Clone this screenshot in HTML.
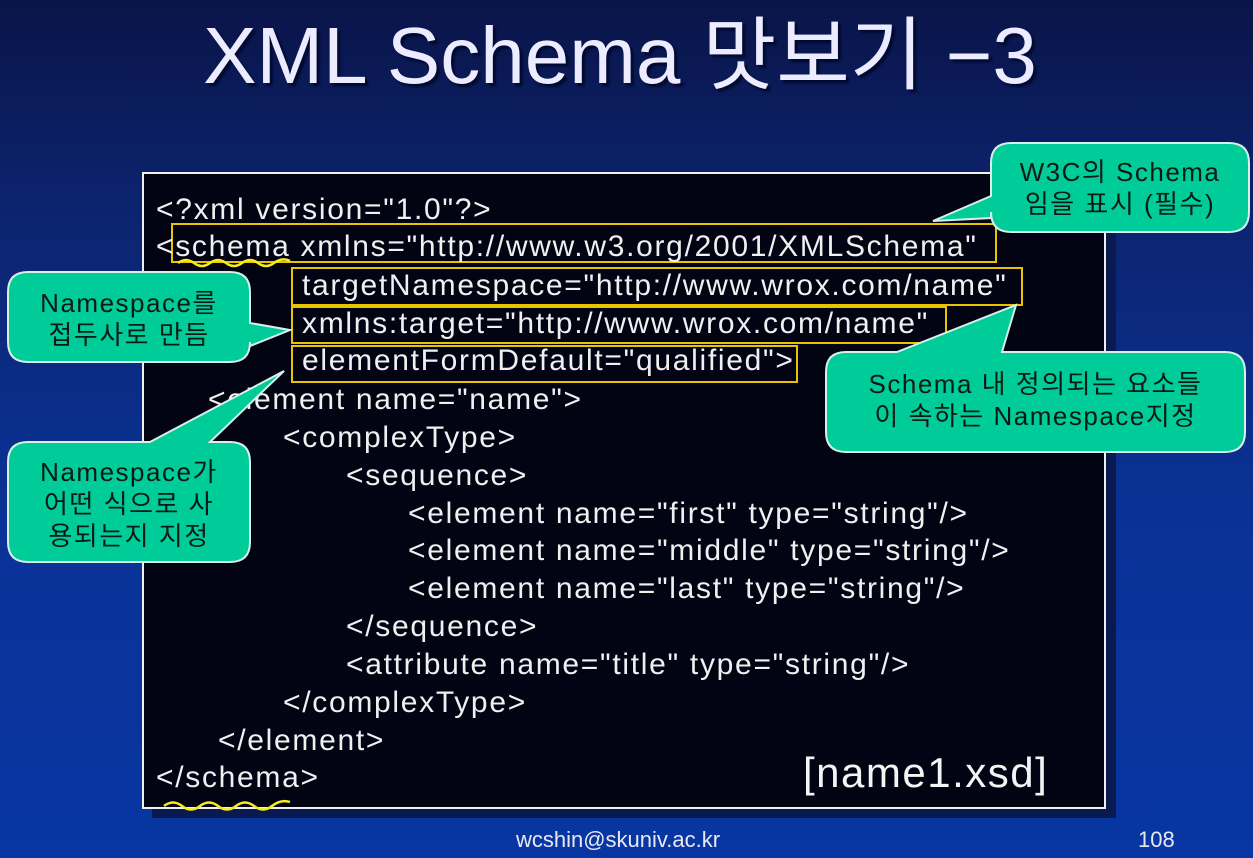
<!DOCTYPE html>
<html><head><meta charset="utf-8"><style>
*{margin:0;padding:0;box-sizing:border-box}
html,body{width:1253px;height:858px;overflow:hidden}
body{position:relative;background:linear-gradient(180deg,#0a1448 0%,#0c2470 25%,#0a3296 60%,#0836a2 100%);font-family:"Liberation Sans","Noto Sans CJK KR",sans-serif}
.t{position:absolute;white-space:pre}
.title{left:0;width:1240px;top:-9px;text-align:center;font-size:80px;color:#ecebff;text-shadow:3px 3px 2px #000a30}
.code{font-size:30px;color:#f0f0f0;line-height:38px;letter-spacing:1.7px}
.cb{position:absolute;border:2px solid #e8c400}
.ct{position:absolute;text-align:center;color:#0a1a14;font-size:26px;line-height:32px;letter-spacing:1.5px}
</style></head><body>
<div class="t title">XML Schema 맛보기 −3</div>
<div style="position:absolute;left:152px;top:182px;width:964px;height:636px;background:#081a50"></div>
<div style="position:absolute;left:142px;top:172px;width:964px;height:637px;background:#020414;border:2px solid #f0f0f0"></div>
<div class="cb" style="left:171px;top:223px;width:826px;height:40px"></div>
<div class="cb" style="left:291px;top:267px;width:732px;height:39px"></div>
<div class="cb" style="left:291px;top:306px;width:656px;height:38px"></div>
<div class="cb" style="left:291px;top:345px;width:507px;height:38px"></div>
<div class="t code" style="left:156px;top:191px">&lt;?xml version="1.0"?&gt;</div>
<div class="t code" style="left:156px;top:228px">&lt;schema xmlns="http://www.w3.org/2001/XMLSchema"</div>
<div class="t code" style="left:302px;top:267px">targetNamespace="http://www.wrox.com/name"</div>
<div class="t code" style="left:302px;top:305px">xmlns:target="http://www.wrox.com/name"</div>
<div class="t code" style="left:302px;top:342px">elementFormDefault="qualified"&gt;</div>
<div class="t code" style="left:208px;top:381px">&lt;element name="name"&gt;</div>
<div class="t code" style="left:283px;top:419px">&lt;complexType&gt;</div>
<div class="t code" style="left:346px;top:457px">&lt;sequence&gt;</div>
<div class="t code" style="left:408px;top:495px">&lt;element name="first" type="string"/&gt;</div>
<div class="t code" style="left:408px;top:532px">&lt;element name="middle" type="string"/&gt;</div>
<div class="t code" style="left:408px;top:570px">&lt;element name="last" type="string"/&gt;</div>
<div class="t code" style="left:346px;top:608px">&lt;/sequence&gt;</div>
<div class="t code" style="left:346px;top:646px">&lt;attribute name="title" type="string"/&gt;</div>
<div class="t code" style="left:283px;top:684px">&lt;/complexType&gt;</div>
<div class="t code" style="left:218px;top:722px">&lt;/element&gt;</div>
<div class="t code" style="left:156px;top:759px">&lt;/schema&gt;</div>
<div class="t" style="left:803px;top:749px;font-size:42px;letter-spacing:1.5px;color:#f4f4f4">[name1.xsd]</div>
<svg style="position:absolute;left:0;top:0" width="1253" height="858">
<g fill="none" stroke="#f4ec20" stroke-width="2.5">
<path d="M178 263 q8 -6 16 0 t16 0 t16 0 t16 0 t16 0 t16 0 t16 -2"/>
<path d="M164 806 q9 -7 18 0 t18 0 t18 0 t18 0 t18 0 t18 0 t18 -4"/>
</g>
<g fill="#00cc99" stroke="#d8f0e8" stroke-width="2">
<path d="M1011 143 H1229 Q1249 143 1249 163 V212 Q1249 232 1229 232 H1011 Q991 232 991 212 V218 L933 221 L991 196 V163 Q991 143 1011 143 Z"/>
<path d="M846 352 H897 L1016 305 L1002 352 H1225 Q1245 352 1245 372 V432 Q1245 452 1225 452 H846 Q826 452 826 432 V372 Q826 352 846 352 Z"/>
<path d="M28 272 H230 Q250 272 250 292 V323 L290 330 L250 346 V342 Q250 362 230 362 H28 Q8 362 8 342 V292 Q8 272 28 272 Z"/>
<path d="M28 442 H150 L284 371 L210 442 H230 Q250 442 250 462 V542 Q250 562 230 562 H28 Q8 562 8 542 V462 Q8 442 28 442 Z"/>
</g>
</svg>
<div class="ct" style="left:991px;top:156px;width:258px">W3C의 Schema<br>임을 표시 (필수)</div>
<div class="ct" style="left:826px;top:368px;width:419px">Schema 내 정의되는 요소들<br>이 속하는 Namespace지정</div>
<div class="ct" style="left:8px;top:287px;width:242px">Namespace를<br>접두사로 만듬</div>
<div class="ct" style="left:8px;top:456px;width:242px">Namespace가<br>어떤 식으로 사<br>용되는지 지정</div>
<div class="t" style="left:0;width:1236px;text-align:center;top:827px;font-size:22px;color:#e8e8f4">wcshin@skuniv.ac.kr</div>
<div class="t" style="left:1138px;top:827px;font-size:22px;color:#e8e8f4">108</div>
</body></html>
